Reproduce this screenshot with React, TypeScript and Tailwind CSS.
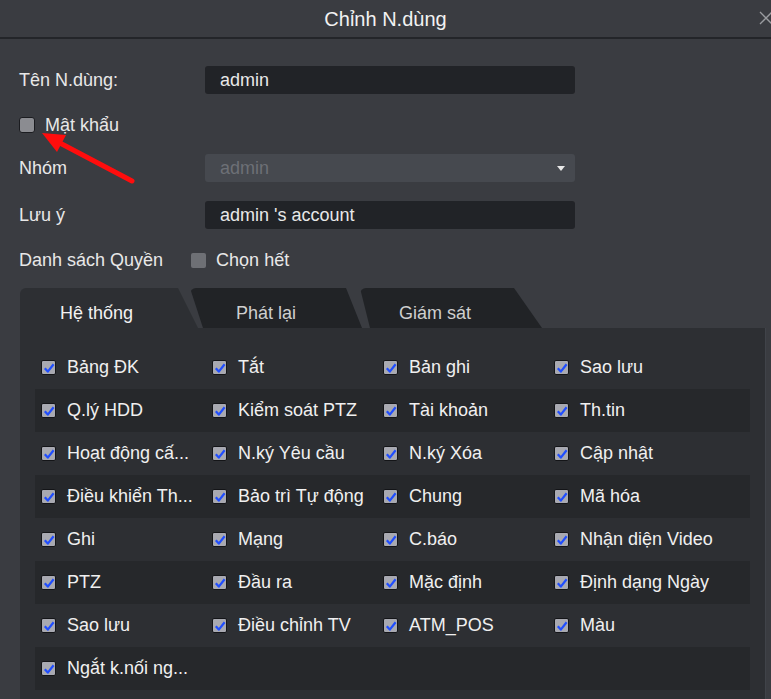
import React from 'react';

const rows: string[][] = [
  ['Bảng ĐK', 'Tắt', 'Bản ghi', 'Sao lưu'],
  ['Q.lý HDD', 'Kiểm soát PTZ', 'Tài khoản', 'Th.tin'],
  ['Hoạt động cấ...', 'N.ký Yêu cầu', 'N.ký Xóa', 'Cập nhật'],
  ['Điều khiển Th...', 'Bảo trì Tự động', 'Chung', 'Mã hóa'],
  ['Ghi', 'Mạng', 'C.báo', 'Nhận diện Video'],
  ['PTZ', 'Đầu ra', 'Mặc định', 'Định dạng Ngày'],
  ['Sao lưu', 'Điều chỉnh TV', 'ATM_POS', 'Màu'],
  ['Ngắt k.nối ng...'],
];

const CheckBox: React.FC = () => (
  <span className="w-[15px] h-[15px] shrink-0 rounded-[2px] border border-[#141518] bg-[#a8a9b1] flex items-center justify-center">
    <svg width="12" height="12" viewBox="0 0 12 12">
      <path d="M1.8 6.2 L4.8 9.6 L10.6 2.2" stroke="#1f4dff" strokeWidth="2.2" fill="none" strokeLinejoin="round" />
    </svg>
  </span>
);

const App: React.FC = () => {
  return (
    <div className="relative w-[771px] h-[699px] overflow-hidden bg-[#3a3c41] text-[#e8e8e8] font-['Liberation_Sans',Arial,sans-serif]">
      {/* title bar */}
      <div className="relative h-[39px] border-b-2 border-[#232529] flex items-center justify-center">
        <span className="text-[20px] text-[#f2f2f2]">Chỉnh N.dùng</span>
        <svg className="absolute left-[759px] top-[11px]" width="14" height="14" viewBox="0 0 14 14">
          <path d="M1 1 L13 13 M13 1 L1 13" stroke="#9a9ca0" strokeWidth="1.3" />
        </svg>
      </div>

      {/* form */}
      <div className="pl-[19px] text-[18px]">
        <div className="mt-[27px] flex items-center h-[28px]">
          <span className="w-[186px]">Tên N.dùng:</span>
          <div className="w-[370px] h-[28px] rounded-[3px] bg-[#212327] pl-[15px] flex items-center">admin</div>
        </div>
        <div className="mt-[17px] flex items-center h-[28px]">
          <span className="w-[16px] h-[16px] rounded-[3px] border border-[#1b1c20] bg-[#8b8c91]" />
          <span className="ml-[10px]">Mật khẩu</span>
        </div>
        <div className="mt-[15px] flex items-center h-[28px]">
          <span className="w-[186px]">Nhóm</span>
          <div className="w-[370px] h-[28px] rounded-[3px] bg-[#46494f] pl-[15px] pr-[10px] flex items-center justify-between text-[#6d7076]">
            <span>admin</span>
            <svg width="8" height="5" viewBox="0 0 8 5">
              <path d="M0 0 L8 0 L4 5 Z" fill="#e8e8e8" />
            </svg>
          </div>
        </div>
        <div className="mt-[19px] flex items-center h-[28px]">
          <span className="w-[186px]">Lưu ý</span>
          <div className="w-[370px] h-[28px] rounded-[3px] bg-[#212327] pl-[15px] flex items-center">admin 's account</div>
        </div>
        <div className="mt-[17px] flex items-center h-[28px]">
          <span>Danh sách Quyền</span>
          <span className="ml-[28px] w-[15px] h-[15px] rounded-[2px] bg-[#6e7075]" />
          <span className="ml-[10px]">Chọn hết</span>
        </div>
      </div>

      {/* tabs */}
      <div className="mt-[14px] ml-[20px] flex h-[40px] text-[18px]">
        <div className="w-[180px] h-[40px] rounded-tl-[6px] bg-[#2d2f33] [clip-path:polygon(0_0,158px_0,178px_100%,0_100%)] pl-[40px] pt-[12px] text-[#f2f2f2]">
          Hệ thống
        </div>
        <div className="ml-[-10px] w-[172px] h-[40px] rounded-tl-[6px] bg-[#212326] [clip-path:polygon(0_0,156px_0,172px_100%,13px_100%)] pl-[46px] pt-[12px] text-[#cfcfcf]">
          Phát lại
        </div>
        <div className="ml-[-2px] w-[182px] h-[40px] rounded-tl-[6px] bg-[#212326] [clip-path:polygon(0_0,154px_0,182px_100%,10px_100%)] pl-[39px] pt-[12px] text-[#cfcfcf]">
          Giám sát
        </div>
      </div>

      {/* permissions panel */}
      <div className="ml-[20px] w-[746px] h-[400px] bg-[#2d2f33] border-r border-[#404349] pl-[15px] pt-[18px] text-[18px]">
        {rows.map((row, i) => (
          <div
            key={i}
            className={`w-[715px] h-[43px] flex items-center pl-[6px] ${i % 2 === 1 ? 'bg-[#26282b]' : ''}`}
          >
            {row.map((label) => (
              <div key={label} className="w-[171px] flex items-center gap-[11px] whitespace-nowrap">
                <CheckBox />
                <span className="text-[#f0f0f0]">{label}</span>
              </div>
            ))}
          </div>
        ))}
      </div>

      {/* red annotation arrow */}
      <svg className="absolute left-0 top-0 pointer-events-none" width="771" height="699" viewBox="0 0 771 699">
        <line x1="132" y1="181" x2="58" y2="142" stroke="#ff0d0d" strokeWidth="5" strokeLinecap="round" />
        <polygon points="42,133 66,135 57,152" fill="#ff0d0d" />
      </svg>
    </div>
  );
};

export default App;
